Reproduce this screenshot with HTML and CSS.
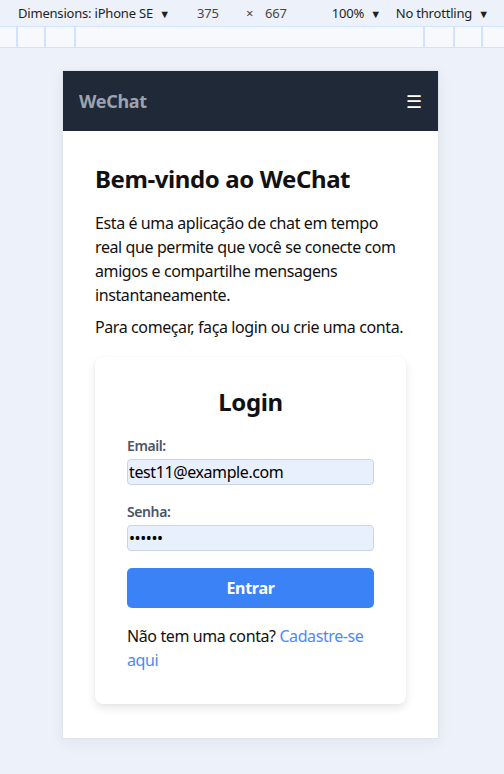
FILE: index.html
```html
<!DOCTYPE html>
<html lang="pt-BR">
<head>
<meta charset="utf-8">
<title>WeChat</title>
<link rel="stylesheet" href="styles.css">
</head>
<body>
<div class="toolbar">
  <span class="tb-item tb-dim">Dimensions: iPhone SE <span class="caret">▼</span></span>
  <span class="tb-num tb-w">375</span>
  <span class="tb-x">×</span>
  <span class="tb-num">667</span>
  <span class="tb-item tb-zoom">100% <span class="caret">▼</span></span>
  <span class="tb-item tb-thr">No throttling <span class="caret">▼</span></span>
</div>
<div class="ruler">
  <div class="seg s1"></div>
  <div class="seg s2"></div>
  <div class="seg s3"></div>
  <div class="seg grow"></div>
  <div class="seg s3"></div>
  <div class="seg s2"></div>
  <div class="seg s4"></div>
</div>
<div class="stage">
  <div class="phone">
    <header class="navbar">
      <span class="brand">WeChat</span>
      <span class="menu">☰</span>
    </header>
    <main class="content">
      <h1 class="title">Bem-vindo ao WeChat</h1>
      <p class="text">Esta é uma aplicação de chat em tempo real que permite que você se conecte com amigos e compartilhe mensagens instantaneamente.</p>
      <p class="text">Para começar, faça login ou crie uma conta.</p>
      <div class="card">
        <h2 class="card-title">Login</h2>
        <div class="field">
          <label class="label">Email:</label>
          <input class="input" type="email" value="test11@example.com">
        </div>
        <div class="field">
          <label class="label">Senha:</label>
          <input class="input" type="password" value="123456">
        </div>
        <button class="btn">Entrar</button>
        <p class="signup">Não tem uma conta? <a class="link" href="#">Cadastre-se</a> <a class="link" href="#">aqui</a></p>
      </div>
    </main>
  </div>
</div>
</body>
</html>
```
FILE: styles.css
```css
* { box-sizing: border-box; }
html, body { margin: 0; padding: 0; }
body {
  background: #edf1f9;
  font-family: "Noto Sans", "Open Sans", sans-serif;
  width: 504px;
  height: 774px;
  overflow: hidden;
}
.toolbar {
  height: 26px;
  display: flex;
  align-items: center;
  font-size: 13px;
  letter-spacing: -0.2px;
  color: #1f1f1f;
  padding-left: 18px;
  background: #edf1f9;
}
.caret { font-size: 11px; margin-left: 3px; }
.tb-dim { width: 179px; }
.tb-num { color: #474747; }
.tb-w { width: 49px; }
.tb-x { width: 19px; color: #474747; }
.tb-zoom { margin-left: 45px; width: 64px; }
.ruler {
  height: 22px;
  display: flex;
  background: #f7f9fd;
  border-top: 1px solid #d3e3fd;
  border-bottom: 1px solid #d3e3fd;
}
.seg { border-right: 2px solid #d3e3fd; }
.s1 { width: 18px; }
.s2 { width: 28px; }
.s3 { width: 30px; }
.s4 { width: 21px; border-right: none; }
.grow { flex: 1; }
.stage {
  display: flex;
  justify-content: flex-start;
  padding: 22px 0 0 62px;
}
.phone {
  width: 377px;
  height: 669px;
  flex: none;
  background: #fff;
  border: 1px solid #dfe3ea;
  box-shadow: 0 4px 14px rgba(30, 40, 80, 0.06);
  overflow: hidden;
}
.navbar {
  height: 60px;
  background: #1f2937;
  display: flex;
  align-items: center;
  justify-content: space-between;
  padding: 0 16px;
}
.brand {
  color: #9ca3af;
  font-weight: 700;
  font-size: 18px;
  letter-spacing: -0.3px;
}
.menu {
  color: #fff;
  font-size: 18px;
}
.content {
  padding: 32px;
  color: #111;
  letter-spacing: -0.4px;
}
.title {
  font-size: 24px;
  line-height: 32px;
  font-weight: 700;
  margin: 0 0 16px;
}
.text {
  font-size: 16px;
  line-height: 24px;
  margin: 0 0 8px;
}
.card {
  margin-top: 18px;
  background: #fff;
  border-radius: 8px;
  box-shadow: 0 4px 8px rgba(0, 0, 0, 0.1), 0 0 2px rgba(0,0,0,0.04);
  padding: 29px 32px 32px;
}
.card-title {
  text-align: center;
  font-size: 24px;
  line-height: 32px;
  font-weight: 700;
  margin: 0 0 18px;
}
.field { margin-bottom: 17px; display: flex; flex-direction: column; }
.label {
  font-size: 14px;
  line-height: 20px;
  font-weight: 600;
  color: #4a5568;
  margin-bottom: 3px;
}
.input {
  width: 100%;
  height: 26px;
  border: 1px solid #cbd5e0;
  border-radius: 4px;
  background: #e8f0fe;
  font-family: inherit;
  font-size: 16px;
  letter-spacing: -0.4px;
  padding: 0 1px;
  color: #000;
}
.btn {
  display: block;
  width: 100%;
  height: 40px;
  border: none;
  border-radius: 5px;
  background: #3b82f6;
  color: #fff;
  font-family: inherit;
  font-size: 16px;
  font-weight: 700;
  letter-spacing: -0.3px;
  margin-top: 1px;
}
.signup {
  margin: 16px 0 0;
  font-size: 16px;
  line-height: 24px;
}
.link { color: #4a8af6; text-decoration: none; }
```
